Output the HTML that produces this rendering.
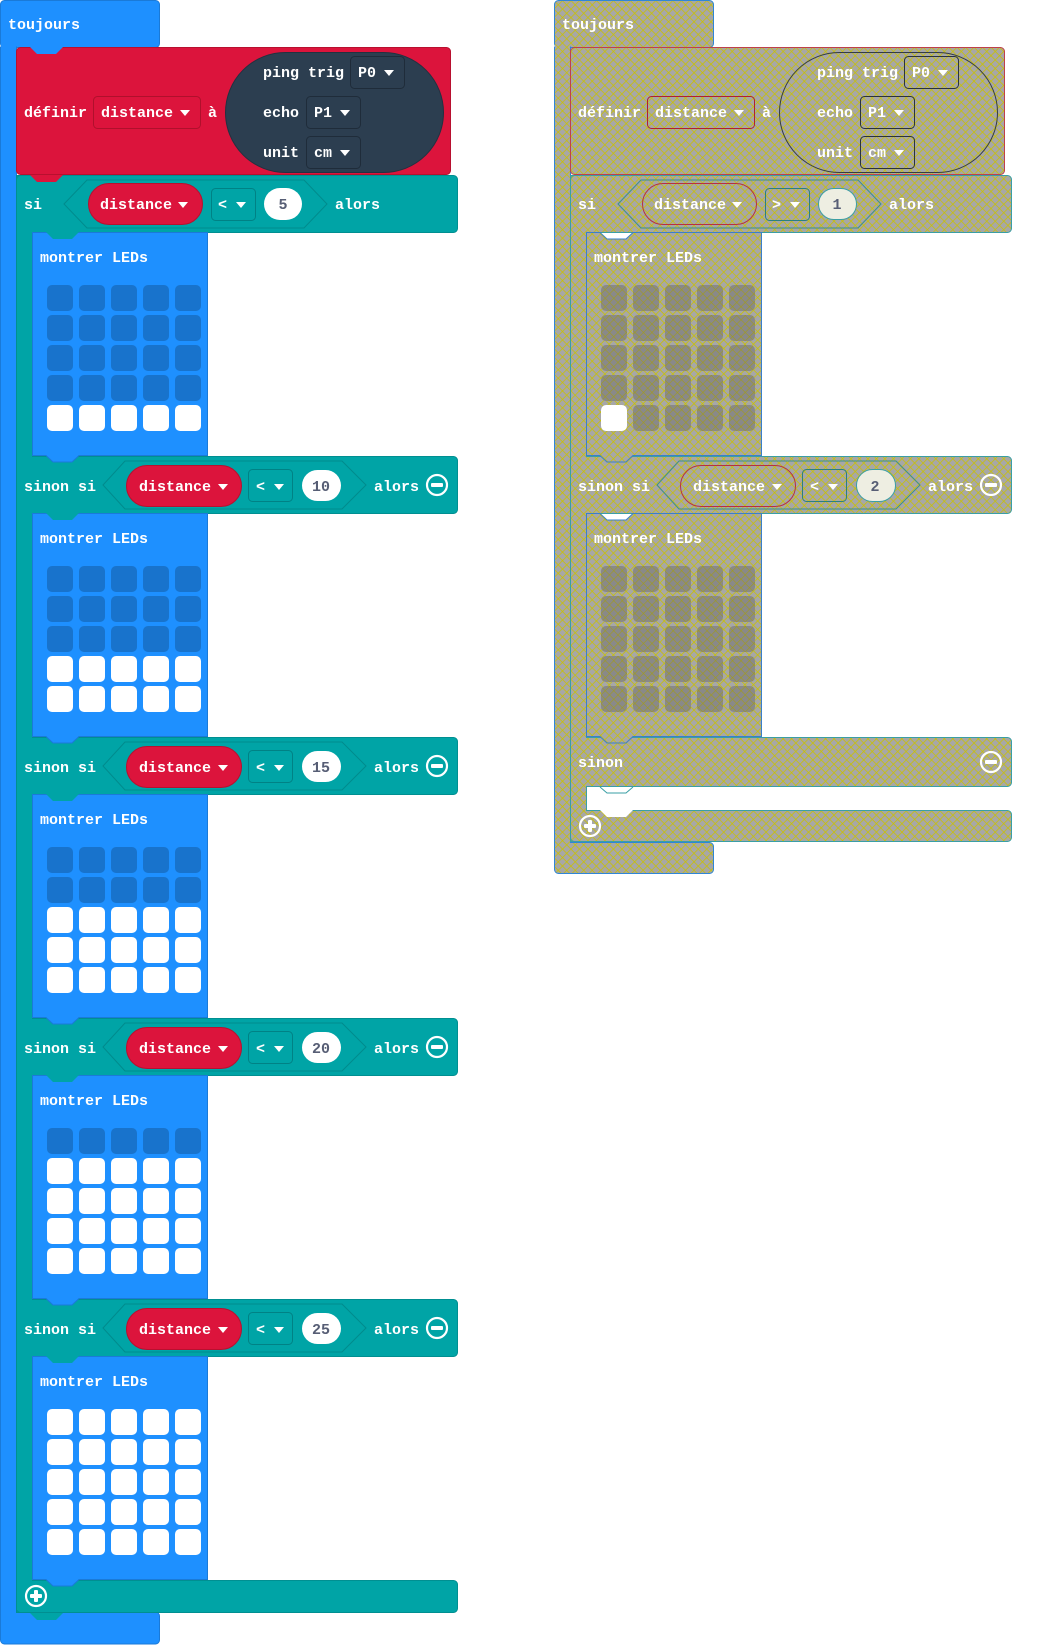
<!DOCTYPE html>
<html><head><meta charset="utf-8"><style>
html,body{margin:0;padding:0;background:#fff;}
svg{display:block}
text{font-family:"Liberation Mono",monospace;font-weight:bold;font-size:15px;fill:#fff;}
.num{fill:#575e75;text-anchor:middle}
</style></head><body>
<svg width="1064" height="1645" viewBox="0 0 1064 1645" xmlns="http://www.w3.org/2000/svg">
<defs>
<pattern id="hp" width="6" height="6" patternUnits="userSpaceOnUse" patternTransform="rotate(45)"><rect width="6" height="6" fill="#a7a7a7"/><path d="M0 0H6M0 0V6" stroke="#c9c100" stroke-width="1.5"/></pattern>
<pattern id="hd" width="6" height="6" patternUnits="userSpaceOnUse" patternTransform="rotate(45)"><rect width="6" height="6" fill="#898989"/><path d="M0 0H6M0 0V6" stroke="#a09a20" stroke-width="1.3"/></pattern>
<g id="dr"><rect x="0" width="26" height="26" rx="5"/><rect x="32" width="26" height="26" rx="5"/><rect x="64" width="26" height="26" rx="5"/><rect x="96" width="26" height="26" rx="5"/><rect x="128" width="26" height="26" rx="5"/></g>
<polygon id="arr" points="0,0 10,0 5,6"/>
</defs>

<!-- ================= LEFT ================= -->
<g stroke="#1a7ad8" stroke-width="1" fill="#1e90ff">
<rect x="0.5" y="0.5" width="159" height="47" rx="4"/>
<rect x="0.5" y="47" width="16" height="1573"/>
<rect x="0.5" y="1612" width="159" height="32" rx="4"/>
</g>
<rect x="1" y="30" width="15" height="1600" fill="#1e90ff"/>
<text x="8" y="29">toujours</text>
<!-- define -->
<rect x="16.5" y="47.5" width="434" height="127" rx="4" fill="#dc143c" stroke="#b8102f"/>
<polygon points="30,47 37,54 56,54 63,47" fill="#1e90ff"/>
<rect x="93.5" y="96.5" width="107" height="32" rx="4" fill="#dc143c" stroke="#b0102c"/>
<text x="24" y="117">définir</text><text x="101" y="117">distance</text><use href="#arr" x="180" y="110" fill="#fff"/>
<text x="208" y="117">à</text>
<rect x="225.5" y="52.5" width="218" height="120" rx="60" fill="#2c3e50" stroke="#233140"/>
<text x="263" y="77">ping trig</text>
<rect x="350.5" y="56.5" width="54" height="32" rx="4" fill="#2c3e50" stroke="#1f2c3a"/><text x="358" y="77">P0</text><use href="#arr" x="384" y="70" fill="#fff"/>
<text x="263" y="117">echo</text>
<rect x="306.5" y="96.5" width="54" height="32" rx="4" fill="#2c3e50" stroke="#1f2c3a"/><text x="314" y="117">P1</text><use href="#arr" x="340" y="110" fill="#fff"/>
<text x="263" y="157">unit</text>
<rect x="306.5" y="136.5" width="54" height="32" rx="4" fill="#2c3e50" stroke="#1f2c3a"/><text x="314" y="157">cm</text><use href="#arr" x="340" y="150" fill="#fff"/>

<!-- teal if structure -->
<g fill="#00a4a6" stroke="#008f91">
<rect x="16.5" y="175.5" width="16" height="1437"/>
<rect x="16.5" y="175.5" width="441" height="57" rx="4"/>
<rect x="16.5" y="456.5" width="441" height="57" rx="4"/>
<rect x="16.5" y="737.5" width="441" height="57" rx="4"/>
<rect x="16.5" y="1018.5" width="441" height="57" rx="4"/>
<rect x="16.5" y="1299.5" width="441" height="57" rx="4"/>
<rect x="16.5" y="1580.5" width="441" height="32" rx="4"/>
</g>
<rect x="17" y="180" width="15" height="1430" fill="#00a4a6"/>
<polygon points="30,175 37,182 56,182 63,175" fill="#dc143c"/>
<polygon points="30,1613 37,1620 56,1620 63,1613" fill="#00a4a6"/>

<!-- row 0 si -->
<text x="24" y="209">si</text>
<polygon points="64,204 87,180 304,180 327,204 304,228 87,228" fill="#00a4a6" stroke="#008b8d"/>
<rect x="88.5" y="183.5" width="114" height="41" rx="20.5" fill="#dc143c" stroke="#b8102f"/><text x="100" y="209">distance</text><use href="#arr" x="178" y="202" fill="#fff"/>
<rect x="211.5" y="188.5" width="44" height="32" rx="4" fill="#00a4a6" stroke="#008285"/><text x="218" y="209">&lt;</text><use href="#arr" x="236" y="202" fill="#fff"/>
<rect x="264" y="188" width="38" height="32" rx="16" fill="#fff"/><text class="num" x="283" y="209">5</text>
<text x="335" y="209">alors</text>

<!-- sinon si rows -->
<g id="ss1">
<text x="24" y="491">sinon si</text>
<polygon points="103,485 125,461 342,461 366,485 342,509 125,509" fill="#00a4a6" stroke="#008b8d"/>
<rect x="126.5" y="465.5" width="115" height="41" rx="20.5" fill="#dc143c" stroke="#b8102f"/><text x="139" y="491">distance</text><use href="#arr" x="218" y="484" fill="#fff"/>
<rect x="248.5" y="469.5" width="44" height="32" rx="4" fill="#00a4a6" stroke="#008285"/><text x="256" y="491">&lt;</text><use href="#arr" x="274" y="484" fill="#fff"/>
<rect x="302" y="470" width="39" height="31" rx="15.5" fill="#fff"/>
<text x="374" y="491">alors</text>
<circle cx="437" cy="485" r="10" fill="none" stroke="#fff" stroke-width="2.2"/><rect x="431" y="483" width="12" height="4" rx="1" fill="#fff"/>
</g>
<text class="num" x="321" y="491">10</text>
<use href="#ss1" y="281"/><text class="num" x="321" y="772">15</text>
<use href="#ss1" y="562"/><text class="num" x="321" y="1053">20</text>
<use href="#ss1" y="843"/><text class="num" x="321" y="1334">25</text>
<circle cx="36" cy="1596" r="10" fill="none" stroke="#fff" stroke-width="2.2"/><rect x="30" y="1594" width="12" height="4" rx="1" fill="#fff"/><rect x="34" y="1590" width="4" height="12" rx="1" fill="#fff"/>

<!-- LED blocks left -->
<g id="lb0">
<path d="M32.5,232.5 H207.5 V455.5 H79 L72,462 H53 L46,455.5 H32.5 Z" fill="#1e90ff" stroke="#1a7ad8"/>
<polygon points="46,232 53,239 72,239 79,232" fill="#00a4a6"/>
<text x="40" y="262">montrer LEDs</text>
</g>
<use href="#lb0" y="281"/><use href="#lb0" y="562"/><use href="#lb0" y="843"/><use href="#lb0" y="1124"/>
<g fill="#1873cc">
<use href="#dr" x="47" y="285"/><use href="#dr" x="47" y="315"/><use href="#dr" x="47" y="345"/><use href="#dr" x="47" y="375"/>
<use href="#dr" x="47" y="566"/><use href="#dr" x="47" y="596"/><use href="#dr" x="47" y="626"/>
<use href="#dr" x="47" y="847"/><use href="#dr" x="47" y="877"/>
<use href="#dr" x="47" y="1128"/>
</g>
<g fill="#fff">
<use href="#dr" x="47" y="405"/>
<use href="#dr" x="47" y="656"/><use href="#dr" x="47" y="686"/>
<use href="#dr" x="47" y="907"/><use href="#dr" x="47" y="937"/><use href="#dr" x="47" y="967"/>
<use href="#dr" x="47" y="1158"/><use href="#dr" x="47" y="1188"/><use href="#dr" x="47" y="1218"/><use href="#dr" x="47" y="1248"/>
<use href="#dr" x="47" y="1409"/><use href="#dr" x="47" y="1439"/><use href="#dr" x="47" y="1469"/><use href="#dr" x="47" y="1499"/><use href="#dr" x="47" y="1529"/>
</g>

<!-- ================= RIGHT ================= -->
<g transform="translate(554,0)">
<g fill="url(#hp)" stroke="#2f86d6">
<rect x="0.5" y="0.5" width="159" height="47" rx="4"/>
<rect x="0.5" y="47" width="16" height="803"/>
<rect x="0.5" y="842.5" width="159" height="31" rx="4"/>
</g>
<rect x="1" y="30" width="15" height="830" fill="url(#hp)"/>
<text x="8" y="29">toujours</text>
<rect x="16.5" y="47.5" width="434" height="127" rx="4" fill="url(#hp)" stroke="#c0404a"/>
<rect x="93.5" y="96.5" width="107" height="32" rx="4" fill="none" stroke="#b02030"/>
<text x="24" y="117">définir</text><text x="101" y="117">distance</text><use href="#arr" x="180" y="110" fill="#fff"/>
<text x="208" y="117">à</text>
<rect x="225.5" y="52.5" width="218" height="120" rx="60" fill="none" stroke="#333c44"/>
<text x="263" y="77">ping trig</text>
<rect x="350.5" y="56.5" width="54" height="32" rx="4" fill="none" stroke="#2a333c"/><text x="358" y="77">P0</text><use href="#arr" x="384" y="70" fill="#fff"/>
<text x="263" y="117">echo</text>
<rect x="306.5" y="96.5" width="54" height="32" rx="4" fill="none" stroke="#2a333c"/><text x="314" y="117">P1</text><use href="#arr" x="340" y="110" fill="#fff"/>
<text x="263" y="157">unit</text>
<rect x="306.5" y="136.5" width="54" height="32" rx="4" fill="none" stroke="#2a333c"/><text x="314" y="157">cm</text><use href="#arr" x="340" y="150" fill="#fff"/>

<g fill="url(#hp)" stroke="#3a9fa5">
<rect x="16.5" y="175.5" width="16" height="666"/>
<rect x="16.5" y="175.5" width="441" height="57" rx="4"/>
<rect x="16.5" y="456.5" width="441" height="57" rx="4"/>
<rect x="16.5" y="737.5" width="441" height="49" rx="4"/>
<rect x="16.5" y="810.5" width="441" height="31" rx="4"/>
</g>
<rect x="17" y="180" width="15" height="655" fill="url(#hp)"/>
<polygon points="46,810 53,817 72,817 79,810" fill="#fff"/>
<path d="M32.5,787 V810 M46,787 L53,793 H72 L79,787" fill="none" stroke="#3a9fa5"/>

<text x="24" y="209">si</text>
<polygon points="64,204 87,180 304,180 327,204 304,228 87,228" fill="none" stroke="#3a8f90"/>
<rect x="88.5" y="183.5" width="114" height="41" rx="20.5" fill="none" stroke="#b83040"/><text x="100" y="209">distance</text><use href="#arr" x="178" y="202" fill="#fff"/>
<rect x="211.5" y="188.5" width="44" height="32" rx="4" fill="none" stroke="#2a8080"/><text x="218" y="209">&gt;</text><use href="#arr" x="236" y="202" fill="#fff"/>
<rect x="264.5" y="188.5" width="38" height="31" rx="15.5" fill="#eeeee2" stroke="#3a9fa5"/><text class="num" x="283" y="209">1</text>
<text x="335" y="209">alors</text>

<text x="24" y="491">sinon si</text>
<polygon points="103,485 125,461 342,461 366,485 342,509 125,509" fill="none" stroke="#3a8f90"/>
<rect x="126.5" y="465.5" width="115" height="41" rx="20.5" fill="none" stroke="#b83040"/><text x="139" y="491">distance</text><use href="#arr" x="218" y="484" fill="#fff"/>
<rect x="248.5" y="469.5" width="44" height="32" rx="4" fill="none" stroke="#2a8080"/><text x="256" y="491">&lt;</text><use href="#arr" x="274" y="484" fill="#fff"/>
<rect x="302.5" y="469.5" width="39" height="32" rx="16" fill="#eeeee2" stroke="#3a9fa5"/><text class="num" x="321" y="491">2</text>
<text x="374" y="491">alors</text>
<circle cx="437" cy="485" r="10" fill="none" stroke="#fff" stroke-width="2.2"/><rect x="431" y="483" width="12" height="4" rx="1" fill="#fff"/>

<text x="24" y="767">sinon</text>
<circle cx="437" cy="762" r="10" fill="none" stroke="#fff" stroke-width="2.2"/><rect x="431" y="760" width="12" height="4" rx="1" fill="#fff"/>
<circle cx="36" cy="826" r="10" fill="none" stroke="#fff" stroke-width="2.2"/><rect x="30" y="824" width="12" height="4" rx="1" fill="#fff"/><rect x="34" y="820" width="4" height="12" rx="1" fill="#fff"/>

<g id="rlb">
<path d="M32.5,232.5 H46 L53,239 H72 L79,232.5 H207.5 V455.5 H79 L72,462 H53 L46,455.5 H32.5 Z" fill="url(#hp)" stroke="#3a80c8"/>
<text x="40" y="262">montrer LEDs</text>
</g>
<use href="#rlb" y="281"/>
<g fill="url(#hd)">
<use href="#dr" x="47" y="285"/><use href="#dr" x="47" y="315"/><use href="#dr" x="47" y="345"/><use href="#dr" x="47" y="375"/><use href="#dr" x="47" y="405"/>
<use href="#dr" x="47" y="566"/><use href="#dr" x="47" y="596"/><use href="#dr" x="47" y="626"/><use href="#dr" x="47" y="656"/><use href="#dr" x="47" y="686"/>
</g>
<rect x="47" y="405" width="26" height="26" rx="5" fill="#fff"/>
</g>
</svg>
</body></html>
